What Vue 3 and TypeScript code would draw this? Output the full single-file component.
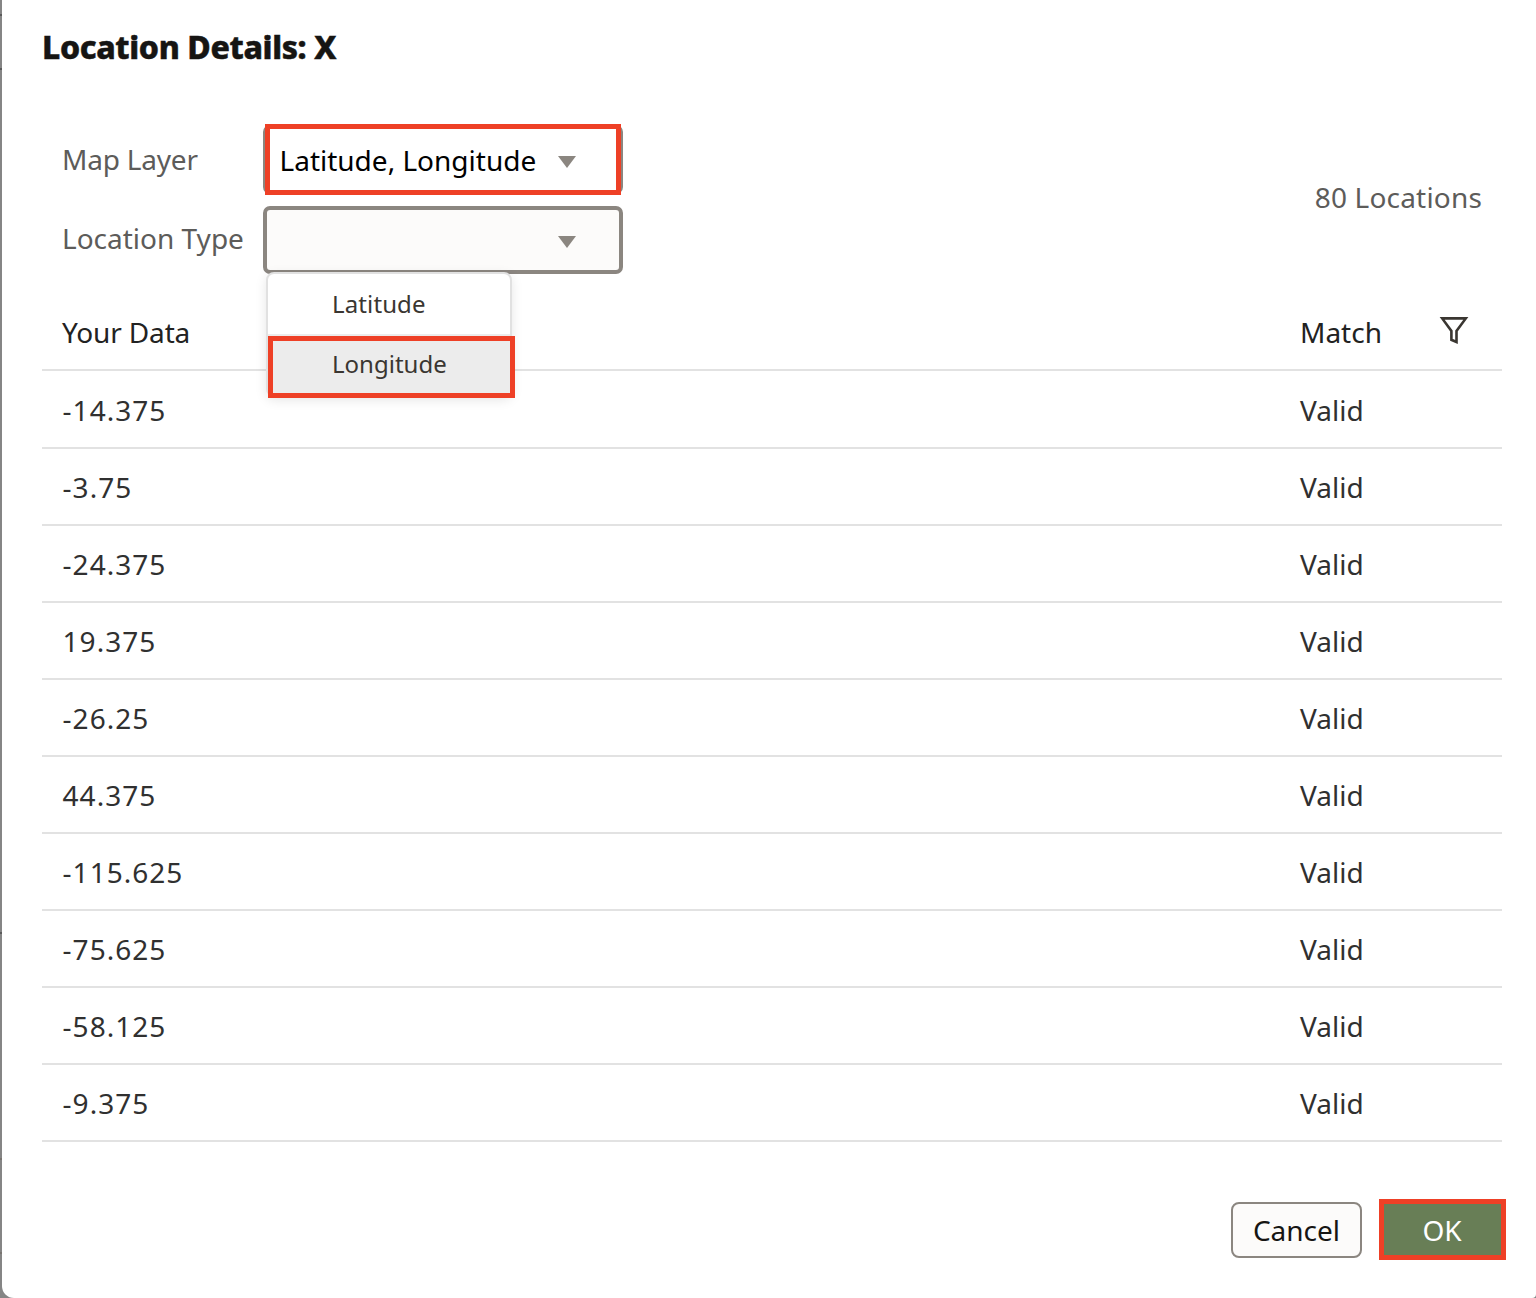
<script setup lang="ts">
interface LocationRow {
  value: string
  match: string
}

const rows: LocationRow[] = [
  '-14.375', '-3.75', '-24.375', '19.375', '-26.25',
  '44.375', '-115.625', '-75.625', '-58.125', '-9.375',
].map((value) => ({ value, match: 'Valid' }))

const edgeMarks: number[] = [14, 68, 932, 1158, 1252]
</script>

<template>
  <div class="backdrop">
    <i v-for="y in edgeMarks" :key="y" class="edge-mark" :class="{ faint: y > 1000 }" :style="{ top: y + 'px' }"></i>
    <main class="dialog">
      <h1 class="title"><span>Location Details: X</span></h1>

      <section class="controls">
        <div class="fields">
          <div class="field field-layer">
            <label class="lbl-map">Map Layer</label>
            <div class="select select-layer">
              <span class="select-value">Latitude, Longitude</span>
              <svg class="caret" width="18" height="12" viewBox="0 0 18 12"><path d="M0 0H18L9 12Z" fill="#8b8680" /></svg>
              <div class="callout"></div>
            </div>
          </div>
          <div class="field field-type">
            <label class="lbl-type">Location Type</label>
            <div class="select">
              <span class="select-value"></span>
              <svg class="caret" width="18" height="12" viewBox="0 0 18 12"><path d="M0 0H18L9 12Z" fill="#8b8680" /></svg>
              <div class="menu">
                <div class="option"><span class="o-lat">Latitude</span></div>
                <div class="option active"><span class="o-lon">Longitude</span></div>
              </div>
            </div>
          </div>
        </div>
        <div class="count"><span>80 Locations</span></div>
      </section>

      <section class="table">
        <div class="row head">
          <div class="cell"><span class="h-data">Your Data</span></div>
          <div class="match"><span class="h-match">Match</span></div>
          <svg class="filter" width="30" height="28" viewBox="0 0 30 28">
            <path d="M3.2 1.4H26.8L17.5 14V25L12.4 22.8V14Z" fill="none" stroke="#3a3631" stroke-width="2.6" />
          </svg>
        </div>
        <div v-for="row in rows" :key="row.value" class="row">
          <div class="cell"><span class="num">{{ row.value }}</span></div>
          <div class="match"><span class="valid">{{ row.match }}</span></div>
        </div>
      </section>

      <footer class="actions">
        <button class="btn cancel"><span>Cancel</span></button>
        <button class="btn ok"><span>OK</span></button>
      </footer>
    </main>
  </div>
</template>

<style>
body {
  margin: 0;
  background: #fff;
}
</style>

<style scoped>
* {
  box-sizing: border-box;
}
.backdrop {
  position: relative;
  width: 1536px;
  height: 1298px;
  padding-left: 2px;
  overflow: hidden;
  background: #858585;
  font-family: "Noto Sans", "Open Sans", sans-serif;
  font-size: 28px;
  line-height: 38px;
  color: #303030;
  white-space: nowrap;
}
.edge-mark {
  position: absolute;
  left: 0;
  width: 2px;
  height: 2px;
  background: #5a5a5a;
}
.edge-mark.faint {
  background: #787470;
}
.dialog {
  display: flex;
  flex-direction: column;
  height: 1298px;
  padding: 0 34px 0 40px;
  background: #fff;
  border-radius: 0 0 4px 12px;
}
.title {
  margin: 0;
  height: 124px;
  padding-top: 25px;
  font-size: 32px;
  line-height: 44px;
  font-weight: 800;
  letter-spacing: -0.36px;
  -webkit-text-stroke: 0.5px #161513;
  color: #161513;
}
.controls {
  display: flex;
  justify-content: space-between;
  height: 171px;
}
.fields {
  display: flex;
  flex-direction: column;
  gap: 12px;
}
.field {
  display: flex;
  align-items: flex-start;
  padding-left: 20px;
  color: #5d5c5a;
}
.field label {
  width: 201px;
  padding-top: 15px;
}
.lbl-map {
  letter-spacing: -0.2px;
}
.field-layer {
  padding-top: 1px;
}
.field-type label {
  padding-top: 13px;
}
.select {
  position: relative;
  display: flex;
  align-items: center;
  width: 360px;
  height: 68px;
  padding: 0 43.5px 0 12.5px;
  border: 4px solid #8b8680;
  border-radius: 7px;
  background: #fcfbfa;
  color: #000;
}
.select-layer {
  height: 69px;
  background: #fff;
}
.select-value {
  flex: 1;
}
.caret {
  display: block;
  margin-top: 4px;
}
.callout {
  position: absolute;
  left: -2px;
  top: -5px;
  width: 356px;
  height: 71px;
  border: 5px solid #ee4026;
}
.menu {
  position: absolute;
  z-index: 2;
  left: -1px;
  top: 62px;
  width: 246px;
  height: 125px;
  border: 2px solid #e1e1e1;
  border-radius: 8px;
  background: #fff;
  box-shadow: 0 3px 12px rgba(0, 0, 0, 0.1);
  font-size: 24px;
  line-height: 34px;
  color: #3a3631;
}
.option {
  height: 62px;
  padding: 13px 0 0 64px;
  border-bottom: 2px solid #ececec;
}
.o-lat {
  letter-spacing: 0.12px;
}
.option.active {
  width: 247px;
  padding: 6px 0 0 59px;
  border: 5px solid #ee4026;
  background: #ececec;
}
.count {
  padding: 54px 20px 0 0;
  letter-spacing: 0.18px;
  color: #5d5c5a;
}
.table {
  display: flex;
  flex-direction: column;
}
.row {
  display: flex;
  align-items: center;
  height: 77px;
  padding: 1px 0 0 20px;
  border-bottom: 2px solid #e2e2e2;
}
.row:nth-child(2) {
  height: 78px;
}
.row.head {
  height: 76px;
  padding-top: 0;
  padding-bottom: 1px;
  color: #222;
}
.h-data {
  letter-spacing: -0.15px;
}
.num {
  padding-left: 0.6px;
  letter-spacing: 1px;
}
.cell {
  width: 1238px;
}
.match {
  width: 138px;
}
.filter {
  margin: -2px 0 0 1px;
}
.actions {
  display: flex;
  justify-content: flex-end;
  align-items: center;
  gap: 17px;
  margin: 57px -4px 0 0;
  height: 61px;
}
.btn {
  display: flex;
  align-items: center;
  justify-content: center;
  padding: 0;
  font: inherit;
}
.cancel {
  width: 131px;
  height: 56px;
  margin-top: 1px;
  border: 2px solid #8b8680;
  border-radius: 8px;
  background: #fcfbfa;
  color: #161513;
}
.ok {
  width: 127px;
  height: 61px;
  padding-right: 1px;
  border: 5px solid #ee4026;
  background: #687e56;
  color: #fff;
}
</style>
